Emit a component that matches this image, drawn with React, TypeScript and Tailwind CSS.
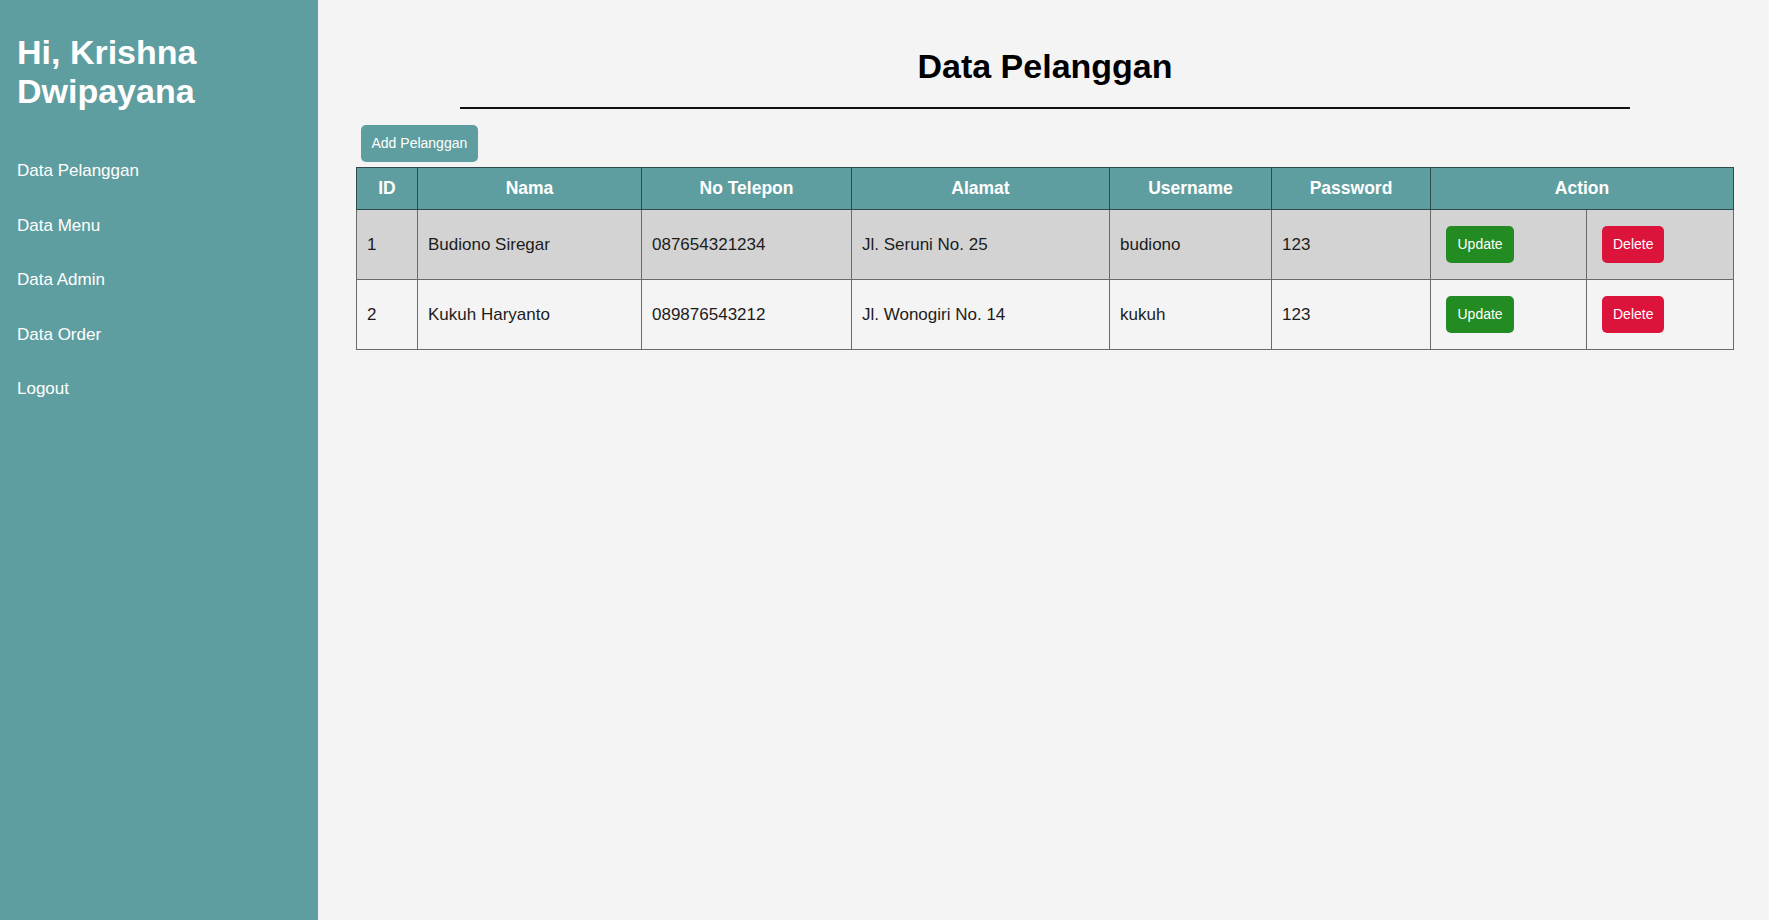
import React from 'react';

const font = { fontFamily: '"Liberation Sans", Arial, sans-serif' };

const navItems = ['Data Pelanggan', 'Data Menu', 'Data Admin', 'Data Order', 'Logout'];

const customers = [
  { id: 1, nama: 'Budiono Siregar', telp: '087654321234', alamat: 'Jl. Seruni No. 25', username: 'budiono', password: '123' },
  { id: 2, nama: 'Kukuh Haryanto', telp: '089876543212', alamat: 'Jl. Wonogiri No. 14', username: 'kukuh', password: '123' },
];

const columns = ['ID', 'Nama', 'No Telepon', 'Alamat', 'Username', 'Password'];

function Sidebar() {
  return (
    <aside className="w-[318px] flex-shrink-0 bg-[#5f9ea0] px-[17px] pt-[32.5px] text-white">
      <h2 className="text-[34px] font-bold leading-[39px]">
        Hi, Krishna
        <br />
        Dwipayana
      </h2>
      <nav className="mt-[33px] flex flex-col">
        {navItems.map((item) => (
          <a key={item} href="#" className="flex h-[54.5px] items-center text-[17px] text-white">
            {item}
          </a>
        ))}
      </nav>
    </aside>
  );
}

export default function App() {
  return (
    <div className="flex h-[920px] w-full" style={font}>
      <Sidebar />

      <main className="flex-1 bg-[#f4f4f4] pl-[38px] pr-[36px] pt-[47px]">
        {/* Title */}
        <h1 className="text-center text-[34px] font-bold leading-[38px] text-black">Data Pelanggan</h1>
        <div className="mx-auto mt-[22px] h-[2px] w-[1170px] bg-[#111]" />

        <button className="ml-[5px] mt-[16px] h-[37px] rounded-[5px] bg-[#5f9ea0] px-[10.5px] text-[14px] text-white">
          Add Pelanggan
        </button>

        {/* Table */}
        <table className="mt-[5px] w-full table-fixed border-collapse border border-[#333] text-[17px] text-[#1c1c1c]">
          <colgroup>
            <col className="w-[61px]" />
            <col className="w-[224px]" />
            <col className="w-[210px]" />
            <col className="w-[258px]" />
            <col className="w-[162px]" />
            <col className="w-[159px]" />
            <col className="w-[156px]" />
            <col className="w-[147px]" />
          </colgroup>
          <thead>
            <tr className="h-[42px] bg-[#5f9ea0] text-[17.5px] text-white">
              {columns.map((col) => (
                <th key={col} className="border border-[#2e4a4b] font-bold">
                  {col}
                </th>
              ))}
              <th colSpan={2} className="border border-[#2e4a4b] font-bold">
                Action
              </th>
            </tr>
          </thead>
          <tbody>
            {customers.map((c, i) => (
              <tr key={c.id} className={i % 2 === 0 ? 'h-[70px] bg-[#d3d3d3]' : 'h-[70px] bg-[#f4f4f4]'}>
                <td className="border border-[#6a6a6a] px-[10px]">{c.id}</td>
                <td className="border border-[#6a6a6a] px-[10px]">{c.nama}</td>
                <td className="border border-[#6a6a6a] px-[10px]">{c.telp}</td>
                <td className="border border-[#6a6a6a] px-[10px]">{c.alamat}</td>
                <td className="border border-[#6a6a6a] px-[10px]">{c.username}</td>
                <td className="border border-[#6a6a6a] px-[10px]">{c.password}</td>
                <td className="border border-[#6a6a6a] pl-[15px]">
                  <button className="h-[37px] rounded-[5px] bg-[#228b22] px-[11.5px] text-[14px] text-white">Update</button>
                </td>
                <td className="border border-[#6a6a6a] pl-[15px]">
                  <button className="h-[37px] rounded-[5px] bg-[#dc143c] px-[11px] text-[14px] text-white">Delete</button>
                </td>
              </tr>
            ))}
          </tbody>
        </table>
      </main>
    </div>
  );
}
